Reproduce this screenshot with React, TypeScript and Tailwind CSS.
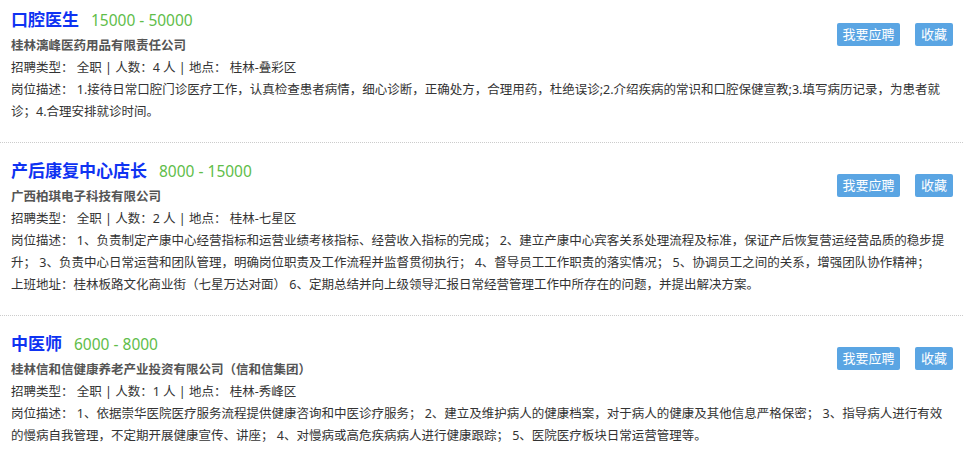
import React from "react";

type Job = {
  title: string;
  salary: string;
  company: string;
  type: string;
  desc: string[];
};

const jobs: Job[] = [
  {
    title: "口腔医生",
    salary: "15000 - 50000",
    company: "桂林漓峰医药用品有限责任公司",
    type: "招聘类型： 全职 | 人数：4 人 | 地点： 桂林-叠彩区",
    desc: [
      "岗位描述： 1.接待日常口腔门诊医疗工作，认真检查患者病情，细心诊断，正确处方，合理用药，杜绝误诊;2.介绍疾病的常识和口腔保健宣教;3.填写病历记录，为患者就",
      "诊；4.合理安排就诊时间。",
    ],
  },
  {
    title: "产后康复中心店长",
    salary: "8000 - 15000",
    company: "广西柏琪电子科技有限公司",
    type: "招聘类型： 全职 | 人数：2 人 | 地点： 桂林-七星区",
    desc: [
      "岗位描述： 1、负责制定产康中心经营指标和运营业绩考核指标、经营收入指标的完成； 2、建立产康中心宾客关系处理流程及标准，保证产后恢复营运经营品质的稳步提",
      "升； 3、负责中心日常运营和团队管理，明确岗位职责及工作流程并监督贯彻执行； 4、督导员工工作职责的落实情况； 5、协调员工之间的关系，增强团队协作精神；",
      "上班地址：桂林板路文化商业街（七星万达对面） 6、定期总结并向上级领导汇报日常经营管理工作中所存在的问题，并提出解决方案。",
    ],
  },
  {
    title: "中医师",
    salary: "6000 - 8000",
    company: "桂林信和信健康养老产业投资有限公司（信和信集团）",
    type: "招聘类型： 全职 | 人数：1 人 | 地点： 桂林-秀峰区",
    desc: [
      "岗位描述： 1、依据崇华医院医疗服务流程提供健康咨询和中医诊疗服务； 2、建立及维护病人的健康档案，对于病人的健康及其他信息严格保密； 3、指导病人进行有效",
      "的慢病自我管理，不定期开展健康宣传、讲座； 4、对慢病或高危疾病病人进行健康跟踪； 5、医院医疗板块日常运营管理等。",
    ],
  },
];

export default function App() {
  return (
    <div
      className="w-[969px] h-[454px] overflow-hidden bg-white text-[#333]"
      style={{ fontFamily: '"Noto Sans", "Noto Sans CJK SC", sans-serif' }}
    >
      <div className="w-[963px]">
        {jobs.map((job, i) => (
          <div
            key={i}
            className={
              "pl-[11px] pr-[10px] pb-[19px] border-b border-dotted border-[#cccccc] " +
              (i === 0 ? "pt-[5px]" : "pt-[13px]")
            }
          >
            <div className="flex items-start justify-between">
              <div>
                <div className="flex items-baseline h-[30px] leading-[30px]">
                  <span className="text-[17px] font-bold text-[#0f33f2]">{job.title}</span>
                  <span className="ml-[12px] text-[15.5px] text-[#5fbd4a]">{job.salary}</span>
                </div>
                <div className="text-[12.5px] leading-[22px] font-bold text-[#555]">{job.company}</div>
              </div>
              <div className="flex gap-[15px] mt-[18px]">
                <button className="w-[63px] h-[23px] rounded-[2px] bg-[#5aa5e3] text-white text-[13px] leading-[23px] text-center">
                  我要应聘
                </button>
                <button className="w-[38px] h-[23px] rounded-[2px] bg-[#5aa5e3] text-white text-[13px] leading-[23px] text-center">
                  收藏
                </button>
              </div>
            </div>
            <div className="text-[12.5px] leading-[22px] whitespace-pre">{job.type}</div>
            {job.desc.map((d, j) => (
              <div key={j} className="text-[12.5px] leading-[22px] whitespace-nowrap">
                {d}
              </div>
            ))}
          </div>
        ))}
      </div>
    </div>
  );
}
